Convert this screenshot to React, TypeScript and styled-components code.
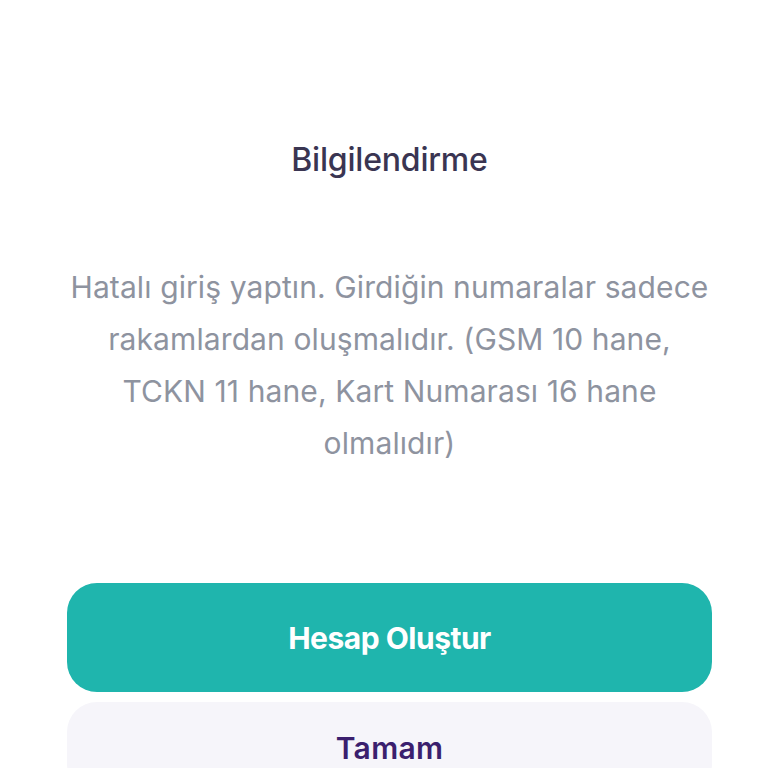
import React from "react";
import styled, { createGlobalStyle } from "styled-components";

const Global = createGlobalStyle`
  html, body { margin: 0; padding: 0; background: #ffffff; }
  body { font-family: "Inter", "Noto Sans", sans-serif; }
`;

const Sheet = styled.div`
  width: 768px;
  height: 768px;
  overflow: hidden;
  box-sizing: border-box;
  padding: 0 56px 0 67px;
  display: flex;
  flex-direction: column;
  align-items: stretch;
`;

const Title = styled.h1`
  margin: 138px 0 0;
  text-align: center;
  font-family: "Inter", sans-serif;
  font-weight: 500;
  font-size: 32px;
  line-height: 44px;
  color: #3a3552;
  letter-spacing: -0.2px;
`;

const Message = styled.p`
  margin: 79px 0 0;
  text-align: center;
  font-family: "Inter", sans-serif;
  font-weight: 400;
  font-size: 30px;
  line-height: 52px;
  color: #8e939f;
  letter-spacing: 0.1px;
`;

const Actions = styled.div`
  margin-top: 114px;
  display: flex;
  flex-direction: column;
  gap: 10px;
`;

const Button = styled.button<{ $variant: "primary" | "secondary" }>`
  flex: none;
  height: ${(p) => (p.$variant === "primary" ? "109px" : "92px")};
  border: none;
  border-radius: 30px;
  font-family: "Inter", sans-serif;
  font-weight: ${(p) => (p.$variant === "primary" ? 700 : 600)};
  font-size: 30px;
  letter-spacing: ${(p) => (p.$variant === "primary" ? "-0.5px" : "0.3px")};
  cursor: pointer;
  background: ${(p) => (p.$variant === "primary" ? "#1fb5ad" : "#f6f5fa")};
  color: ${(p) => (p.$variant === "primary" ? "#ffffff" : "#3b1f6e")};
`;

export default function App() {
  return (
    <>
      <Global />
      <Sheet>
        <Title>Bilgilendirme</Title>
        <Message>
          Hatalı giriş yaptın. Girdiğin numaralar sadece rakamlardan oluşmalıdır. (GSM 10 hane, TCKN 11
          hane, Kart Numarası 16 hane olmalıdır)
        </Message>
        <Actions>
          <Button $variant="primary">Hesap Oluştur</Button>
          <Button $variant="secondary">Tamam</Button>
        </Actions>
      </Sheet>
    </>
  );
}
